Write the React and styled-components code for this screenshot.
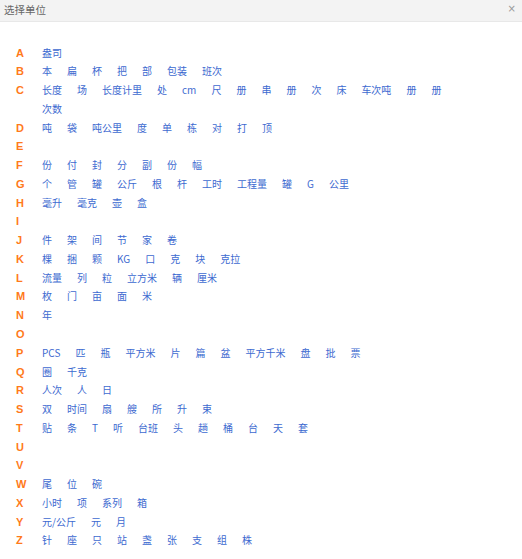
import React from "react";
import styled, { createGlobalStyle } from "styled-components";

const Global = createGlobalStyle`
  html, body { margin: 0; padding: 0; background: #fff; }
  body { font-family: "Noto Sans CJK SC", "Noto Sans", sans-serif; }
`;

const Dialog = styled.div`
  width: 522px;
  height: 559px;
  background: #fff;
  display: flex;
  flex-direction: column;
`;

const Header = styled.div`
  height: 21px;
  background: #f3f3f3;
  border-bottom: 1px solid #e8e8e8;
  display: flex;
  align-items: center;
  justify-content: space-between;
  padding: 0 6px 0 4px;
`;

const Title = styled.span`
  font-size: 10.5px;
  color: #666;
  line-height: 1;
`;

const Close = styled.span`
  font-family: "DejaVu Sans", sans-serif;
  font-size: 10px;
  color: #999;
  line-height: 1;
  margin-top: -4px;
`;

const Body = styled.div`
  padding: 21.5px 52px 0 16px;
`;

const Row = styled.div`
  display: flex;
  align-items: flex-start;
  line-height: 18.77px;
`;

const Letter = styled.div`
  width: 26px;
  flex: none;
  font-family: "Liberation Sans", Arial, sans-serif;
  font-weight: bold;
  font-size: 11px;
  color: #ff7a1a;
`;

const Items = styled.div`
  flex: 1;
  min-height: 18.77px;
  display: flex;
  flex-wrap: wrap;
`;

const Item = styled.span`
  font-size: 10px;
  color: #3d6ad0;
  margin-right: 15px;
  cursor: pointer;
  white-space: nowrap;
`;

const data = [
  ["A", "盎司"],
  ["B", "本 扁 杯 把 部 包装 班次"],
  ["C", "长度 场 长度计里 处 cm 尺 册 串 册 次 床 车次吨 册 册 次数"],
  ["D", "吨 袋 吨公里 度 单 栋 对 打 顶"],
  ["E", ""],
  ["F", "份 付 封 分 副 份 幅"],
  ["G", "个 管 罐 公斤 根 杆 工时 工程量 罐 G 公里"],
  ["H", "毫升 毫克 壶 盒"],
  ["I", ""],
  ["J", "件 架 间 节 家 卷"],
  ["K", "棵 捆 颗 KG 口 克 块 克拉"],
  ["L", "流量 列 粒 立方米 辆 厘米"],
  ["M", "枚 门 亩 面 米"],
  ["N", "年"],
  ["O", ""],
  ["P", "PCS 匹 瓶 平方米 片 篇 盆 平方千米 盘 批 票"],
  ["Q", "圈 千克"],
  ["R", "人次 人 日"],
  ["S", "双 时间 扇 艘 所 升 束"],
  ["T", "贴 条 T 听 台班 头 趟 桶 台 天 套"],
  ["U", ""],
  ["V", ""],
  ["W", "尾 位 碗"],
  ["X", "小时 项 系列 箱"],
  ["Y", "元/公斤 元 月"],
  ["Z", "针 座 只 站 盏 张 支 组 株"],
];

export default function App() {
  return (
    <>
      <Global />
      <Dialog>
        <Header>
          <Title>选择单位</Title>
          <Close>×</Close>
        </Header>
        <Body>
          {data.map(([letter, items]) => (
            <Row key={letter}>
              <Letter>{letter}</Letter>
              <Items>
                {items
                  .split(" ")
                  .filter(Boolean)
                  .map((it, i) => (
                    <Item key={i}>{it}</Item>
                  ))}
              </Items>
            </Row>
          ))}
        </Body>
      </Dialog>
    </>
  );
}
